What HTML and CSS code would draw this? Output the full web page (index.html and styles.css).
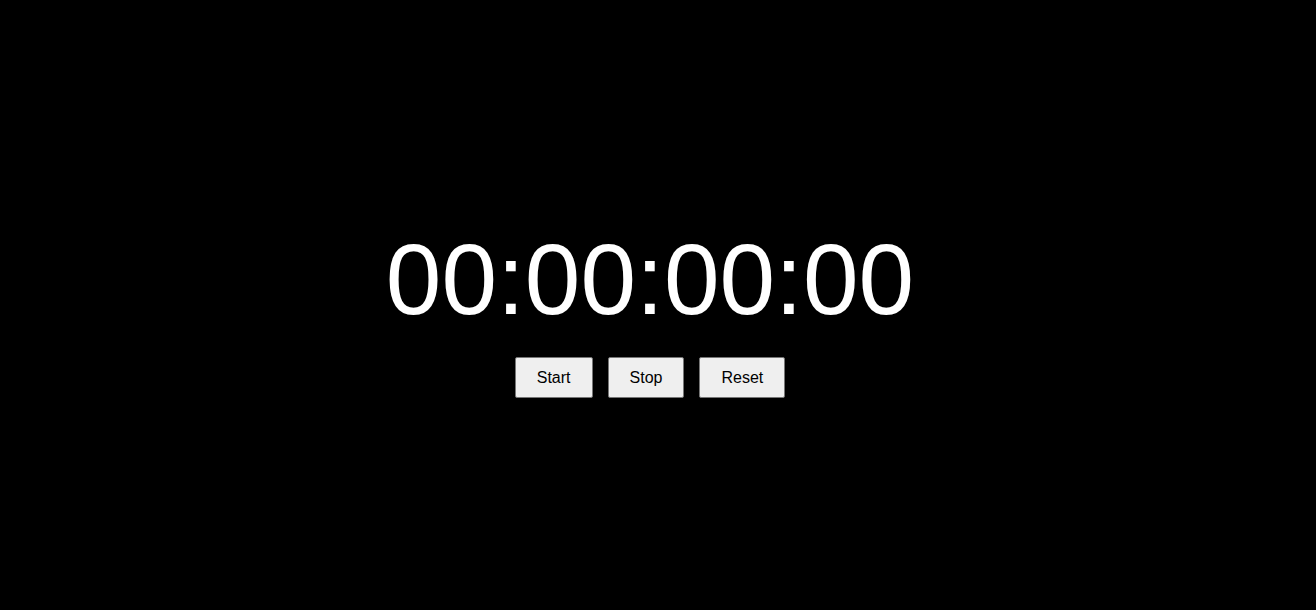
FILE: index.html
```html
<!DOCTYPE html>
<html lang="en">
<head>
<meta charset="utf-8">
<title>Stopwatch</title>
<link rel="stylesheet" href="styles.css">
</head>
<body>
<main class="stopwatch">
  <div class="display">00:00:00:00</div>
  <div class="controls">
    <button class="btn">Start</button>
    <button class="btn">Stop</button>
    <button class="btn">Reset</button>
  </div>
</main>
</body>
</html>
```
FILE: styles.css
```css
html, body {
  margin: 0;
  padding: 0;
  background: #000;
}
body {
  font-family: "Liberation Sans", Arial, sans-serif;
}
.stopwatch {
  height: 610px;
  box-sizing: border-box;
  padding-top: 10px;
  padding-right: 16px;
  display: flex;
  flex-direction: column;
  align-items: center;
  justify-content: center;
}
.display {
  color: #fff;
  font-size: 100px;
  line-height: 1.15;
  margin-bottom: 20px;
}
.controls {
  display: flex;
  gap: 15px;
}
.btn {
  font-family: "Liberation Sans", Arial, sans-serif;
  font-size: 16px;
  color: #000;
  background: #efefef;
  border: 1px solid #767676;
  border-radius: 2px;
  padding: 10px 21px;
  line-height: 19px;
  margin: 0;
}
```
